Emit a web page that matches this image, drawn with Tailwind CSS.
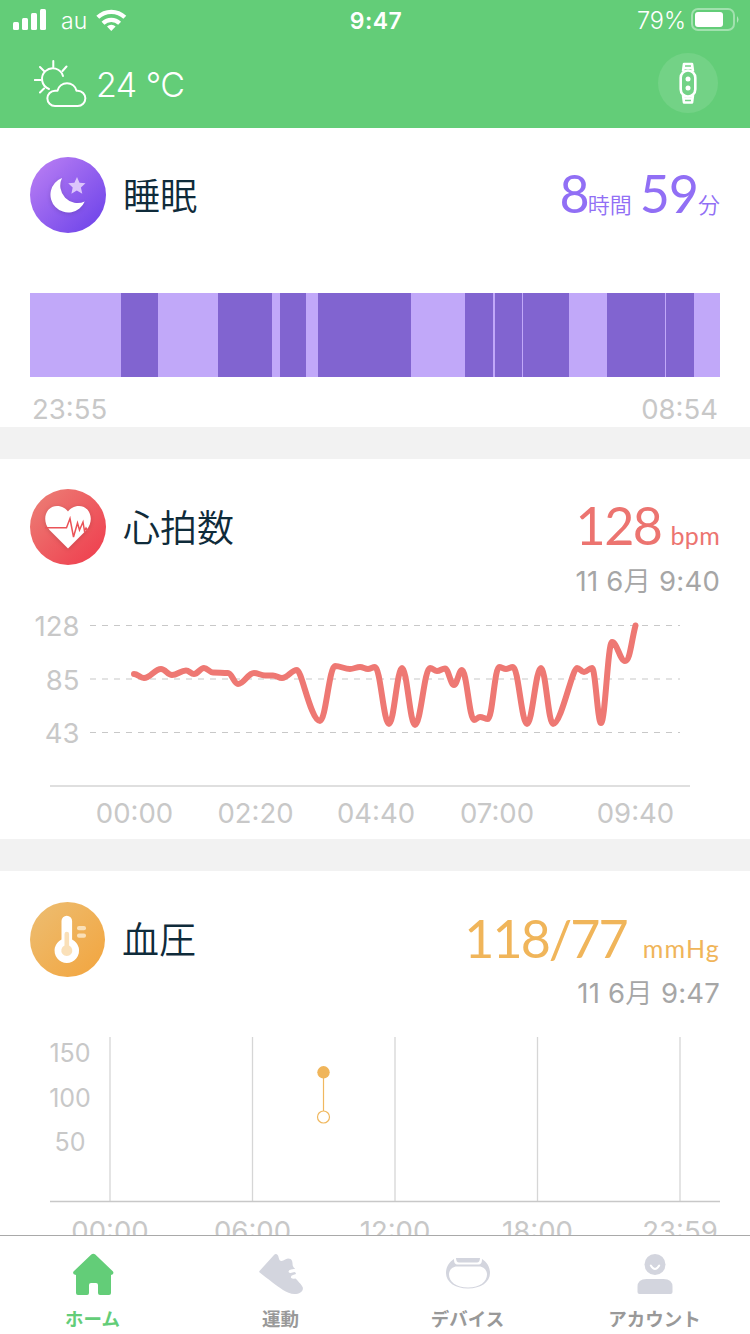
<!DOCTYPE html>
<html lang="ja">
<head>
    <meta charset="UTF-8">
    <meta name="viewport" content="width=device-width, initial-scale=1.0">
    <title>ホーム</title>
    <script src="https://cdn.jsdelivr.net/npm/@tailwindcss/browser@4"></script>
</head>
<body class="flex flex-col w-[750px] h-[1334px] overflow-hidden bg-white font-['Inter','Noto_Sans_CJK_JP',sans-serif]">

    <!-- Header -->
    <header class="h-32 shrink-0 bg-[#63cd78] text-white">
        <div class="grid grid-cols-3 items-center h-10 pl-[13px] pr-[11px]">
            <div class="flex items-center">
                <svg class="w-[34px] h-[22px]" viewBox="0 0 34 22" fill="currentColor">
                    <rect x="0" y="13" width="6" height="8" rx="1.5"/>
                    <rect x="9" y="9" width="6" height="12" rx="1.5"/>
                    <rect x="18" y="4" width="6" height="17" rx="1.5"/>
                    <rect x="27" y="0" width="6" height="21" rx="1.5"/>
                </svg>
                <span class="ml-[14px] pt-0.5 w-[27px] text-[23px] font-light">au</span>
                <svg class="ml-2 w-[31px] h-[22px]" viewBox="0 0 31 22" fill="none" stroke="currentColor" stroke-width="4.2">
                    <path d="M1.800 8.300a19.500 19.500 0 0 1 27 0"/>
                    <path d="M7 14.200a12 12 0 0 1 16.600 0"/>
                    <path d="M15.300 22l-4.300-4.500a6.500 6.500 0 0 1 8.600 0z" fill="currentColor" stroke="none"/>
                </svg>
            </div>
            <div class="pt-0.5 text-center text-[23px] font-semibold tracking-[0.5px]">9:47</div>
            <div class="flex items-center justify-end">
                <span class="mr-[5px] pt-0.5 text-[23.5px] font-light">79%</span>
                <svg class="w-[48px] h-[24px]" viewBox="0 0 48 24" fill="none">
                    <rect x="1" y="1" width="42" height="21" rx="6" stroke="#fff" stroke-opacity=".4" stroke-width="2"/>
                    <rect x="4" y="4" width="28" height="15" rx="3" fill="#fff"/>
                    <path d="M46 8q3 3.500 0 7z" fill="#fff" fill-opacity=".5"/>
                </svg>
            </div>
        </div>
        <div class="flex items-center justify-between h-[86px] pl-[34px] pr-8">
            <div class="flex items-center">
                <svg class="w-[53px] h-[48px]" viewBox="0 0 53 48" fill="none" stroke="currentColor" stroke-width="2" stroke-linecap="round" stroke-linejoin="round">
                    <path d="M15 30a10.700 10.700 0 1 1 14-13"/>
                    <path d="M19.300 2v6M6 8l4 4M32.500 7.500l-4 4.500M.8 21h6M6 33.500l4-4"/>
                    <path d="M21 47a7.500 7.500 0 0 1 0-15.300h2.500a9.800 9.800 0 0 1 19 0h1.200a7.600 7.600 0 0 1 0 15.300z"/>
                </svg>
                <span class="ml-[9px] pt-0.5 text-[34px] font-light tracking-[-0.5px] whitespace-nowrap">24 °C</span>
            </div>
            <div class="flex items-center justify-center size-[60px] rounded-full bg-white/10">
                <svg class="w-[18px] h-[42px]" viewBox="0 0 18 42" fill="none" stroke="currentColor" stroke-width="2.600" stroke-linejoin="round">
                    <path d="M4 9.500L5 2h8l1 7.500M4 33l1 7.500h8l1-7.500M5 6h8M5 36.500h8"/>
                    <rect x="1.700" y="8.500" width="14.600" height="26" rx="7.300"/>
                    <g fill="currentColor" stroke="none">
                        <circle cx="9" cy="17" r="2.500"/>
                        <circle cx="9" cy="26" r="2.500"/>
                    </g>
                </svg>
            </div>
        </div>
    </header>

    <main class="flex flex-col h-[1107px] overflow-hidden gap-8 bg-[#f2f2f2]">
        <!-- Sleep -->
        <section class="h-[299px] shrink-0 bg-white px-[30px] pt-[29px]">
            <div class="flex items-center justify-between h-[76px]">
                <div class="flex items-center gap-[17px]">
                    <svg class="size-[76px]" viewBox="0 0 76 76">
                        <defs>
                            <linearGradient id="sleepBg" x1="0.1" y1="0.1" x2="0.9" y2="0.9">
                                <stop offset="0" stop-color="#b57bf3"/>
                                <stop offset="1" stop-color="#7146ea"/>
                            </linearGradient>
                        </defs>
                        <circle cx="38" cy="38" r="38" fill="url(#sleepBg)"/>
                        <path class="drop-shadow-sm" d="M32 21A17.800 17.800 0 1 0 54.700 44.500A17.400 17.400 0 0 1 32 21z" fill="#fff"/>
                        <path d="M47 20l2.500 5.700 6 .6-4.600 4.200 1.400 6.200-5.500-3.200-5.400 3.200 1.300-6.200-4.500-4.200 6.200-.6z" fill="#dcc5fb"/>
                    </svg>
                    <h2 class="pt-0.5 text-[37px] leading-none font-[350] text-[#0f2b3a]">睡眠</h2>
                </div>
                <div class="flex items-baseline pb-1 text-[#916ff5] leading-none">
                    <span class="font-['Lato'] text-[52px] tracking-[-1px]">8</span>
                    <span class="-ml-px text-[22px] font-[350]">時間</span>
                    <span class="ml-2 font-['Lato'] text-[52px] tracking-[-1px]">59</span>
                    <span class="text-[22px] font-[350]">分</span>
                </div>
            </div>
            <!-- deep sleep blocks over the light sleep strip -->
            <svg class="mt-[60px] w-[690px] h-[84px] bg-[#c1a8f9]" viewBox="0 0 690 84" fill="#8164d0">
                <rect x="91" width="37" height="84"/>
                <rect x="188" width="54" height="84"/>
                <rect x="250" width="26" height="84"/>
                <rect x="288" width="93" height="84"/>
                <rect x="435" width="28" height="84"/>
                <rect x="465" width="27" height="84"/>
                <rect x="493" width="46" height="84"/>
                <rect x="577" width="58" height="84"/>
                <rect x="636" width="28" height="84"/>
            </svg>
            <div class="flex justify-between mt-[14px] px-[2px] text-[27.5px] leading-9 text-[#c8c8c8]">
                <span>23:55</span>
                <span>08:54</span>
            </div>
        </section>

        <!-- Heart rate -->
        <section class="h-[380px] shrink-0 bg-white pt-[30px]">
            <div class="flex items-center justify-between h-[76px] px-[30px]">
                <div class="flex items-center gap-[17px]">
                    <svg class="size-[76px]" viewBox="0 0 76 76">
                        <defs>
                            <linearGradient id="heartBg" x1="0.1" y1="0.1" x2="0.9" y2="0.9">
                                <stop offset="0" stop-color="#ec7a73"/>
                                <stop offset="1" stop-color="#ef4150"/>
                            </linearGradient>
                        </defs>
                        <circle cx="38" cy="38" r="38" fill="url(#heartBg)"/>
                        <path class="drop-shadow-sm" d="M38 59.500L19.500 41C11 31 16 17 27 17c5 0 9 2.500 11 5.500C40 19.500 44 17 49 17c11 0 16 14 7.500 24z" fill="#fff"/>
                        <path d="M15 38.700h21.500L40 29.500l3.500 18.500 4-14 2 7 3.500-8 1.500 9 1.500-3 1.500 2.500h4" fill="none" stroke="#ea5358" stroke-width="1.500"/>
                    </svg>
                    <h2 class="pt-0.5 text-[37px] leading-none font-[350] text-[#0f2b3a]">心拍数</h2>
                </div>
                <div class="flex items-baseline pb-1 text-[#ec7470] leading-none">
                    <span class="font-['Lato'] text-[52px] tracking-[-1.5px]">128</span>
                    <span class="ml-[9px] font-['Lato'] text-[25px] tracking-[0.3px]">bpm</span>
                </div>
            </div>
            <p class="pr-[30px] text-right text-[27.5px] leading-8 tracking-[0.2px] text-[#a6a6a6]">11 6<span class="font-[350]">月</span> 9:40</p>
            <svg class="w-[750px] h-[242px]" viewBox="0 597 750 242" font-size="27.5">
                <g stroke="#c8c8c8" stroke-width="1.200" stroke-dasharray="6 6">
                    <path d="M90 625.500H680M90 679H680M90 732.500H680"/>
                </g>
                <path d="M50 786H690" stroke="#d4d4d4" stroke-width="1.500"/>
                <g fill="#c8c8c8" text-anchor="end">
                    <text x="79.500" y="636">128</text>
                    <text x="79.500" y="690">85</text>
                    <text x="79.500" y="743">43</text>
                </g>
                <g fill="#c8c8c8" text-anchor="middle">
                    <text x="134.500" y="823">00:00</text>
                    <text x="255.500" y="823">02:20</text>
                    <text x="376" y="823">04:40</text>
                    <text x="497" y="823">07:00</text>
                    <text x="635.500" y="823">09:40</text>
                </g>
                <path id="heartLine" fill="none" stroke="#ee7873" stroke-width="6" stroke-linecap="round" stroke-linejoin="round"/>
            </svg>
        </section>

        <!-- Blood pressure -->
        <section class="h-[400px] shrink-0 bg-white pt-[31px]">
            <div class="flex items-center justify-between h-[75px] px-[30px]">
                <div class="flex items-center gap-[17px]">
                    <svg class="size-[75px]" viewBox="0 0 75 75">
                        <defs>
                            <linearGradient id="pressureBg" x1="0.1" y1="0.1" x2="0.9" y2="0.9">
                                <stop offset="0" stop-color="#edbb6d"/>
                                <stop offset="1" stop-color="#f2a743"/>
                            </linearGradient>
                        </defs>
                        <circle cx="37.500" cy="37.500" r="37.500" fill="url(#pressureBg)"/>
                        <path d="M31.500 19a5.300 5.300 0 0 1 10.600 0v18.500a12.300 12.300 0 1 1-10.600 0z" fill="#fff"/>
                        <g fill="#fae0b8">
                            <path d="M34.500 32a2.300 2.300 0 0 1 4.600 0v11.500a5.500 5.500 0 1 1-4.600 0z"/>
                            <rect x="47" y="24" width="9" height="4.200" rx="2"/>
                            <rect x="47" y="31.500" width="9" height="4.200" rx="2"/>
                        </g>
                    </svg>
                    <h2 class="pt-0.5 text-[37px] leading-none font-[350] text-[#0f2b3a]">血圧</h2>
                </div>
                <div class="flex items-baseline pb-1 text-[#f0b55a] leading-none">
                    <span class="font-['Lato'] text-[52px] tracking-[-2px]">118/77</span>
                    <span class="ml-4 font-['Lato'] text-[25px] tracking-[1.200px]">mmHg</span>
                </div>
            </div>
            <p class="mb-px pr-[30px] text-right text-[27.5px] leading-8 tracking-[0.2px] text-[#a6a6a6]">11 6<span class="font-[350]">月</span> 9:47</p>
            <svg class="w-[750px] h-[250px]" viewBox="0 1010 750 250">
                <g stroke="#d6d6d6" stroke-width="1.300">
                    <path d="M110 1037V1201M252.500 1037V1201M395 1037V1201M537.500 1037V1201M680 1037V1201"/>
                    <path d="M50 1201.500H720" stroke="#c8c8c8"/>
                </g>
                <g fill="#c8c8c8" font-size="25" text-anchor="middle">
                    <text x="70" y="1061.500">150</text>
                    <text x="70" y="1106.500">100</text>
                    <text x="70" y="1151">50</text>
                </g>
                <g fill="#c8c8c8" font-size="27.5" text-anchor="middle">
                    <text x="110" y="1241">00:00</text>
                    <text x="252.500" y="1241">06:00</text>
                    <text x="395" y="1241">12:00</text>
                    <text x="537.500" y="1241">18:00</text>
                    <text x="680" y="1241">23:59</text>
                </g>
                <path d="M323.500 1072V1111" stroke="#f0b85f" stroke-width="1.200"/>
                <circle cx="323.500" cy="1072.300" r="6.200" fill="#f0b55a"/>
                <circle cx="323.500" cy="1117" r="6" fill="#fff" stroke="#f0b85f" stroke-width="1.200"/>
            </svg>
        </section>
    </main>

    <!-- Tab bar -->
    <nav class="grid grid-cols-4 h-[99px] shrink-0 border-t border-[#a9a9a9] bg-white pr-[2px] text-[18.5px] leading-6 text-[#999999]">
        <a class="flex flex-col items-center pt-[17px] pr-[2px] text-[#63cd78]">
            <svg class="w-[44px] h-[44px]" viewBox="0 0 44 44" fill="currentColor">
                <path d="M20.300 1.500q2-1.400 4 0L42 18.500q1.500 3-2 3.500v18q0 2-2 2h-9q-2 0-2-2v-8q0-2-2-2h-5q-2 0-2 2v8q0 2-2 2H7q-2 0-2-2V22q-4-.5-2.500-3.500z"/>
            </svg>
            <span class="mt-[10px] font-bold">ホーム</span>
        </a>
        <a class="flex flex-col items-center pt-[17px]">
            <svg class="w-[46px] h-[44px]" viewBox="0 0 46 44" fill="#d3d5de">
                <path d="M1.500 18L16 2q2-2 4 .5c1 2 .8 5.500 3.500 5.500 2.500 0 4-2.500 6.500-2.500 4.500 0 4.500 3.500 4.700 7q.3 2 2.500 3.200l-4.200.8q-3 .8-2.300 2.800 1 1.200 2.800.4l3-.7q1.500.5 1.500 2l-3 1q-2.500.8-2 2.700 1 1.300 4.500.8c2 2 6 6 7.300 9 .8 4-3.300 6.500-8.300 6.500-4 0-8-2-11.500-4C19 33 10 26 1.700 19.500q-.8-.7-.2-1.500z"/>
            </svg>
            <span class="mt-[10px] font-bold">運動</span>
        </a>
        <a class="flex flex-col items-center pt-[17px]">
            <svg class="w-[46px] h-[44px]" viewBox="0 0 46 44" fill="#d3d5de">
                <path fill-rule="evenodd" d="M9 6C4 9 1 14 1 20c0 9 9 15.500 22 15.500s22-6.500 22-15.500c0-6-3-11-8-14 0 4-1 5.500-4 5.500H13c-3 0-4-1.500-4-5.500zm3 7.500h22c5 0 8 4 8 8 0 7-7 13-19 13S4 28.500 4 21.500c0-4 3-8 8-8z"/>
                <path d="M11 5h24q-.3 4.500-3 4.500H14q-2.700 0-3-4.500z"/>
            </svg>
            <span class="mt-[10px] font-bold">デバイス</span>
        </a>
        <a class="flex flex-col items-center pt-[17px]">
            <svg class="w-[36px] h-[44px]" viewBox="0 0 36 44" fill="#d3d5de">
                <circle cx="18" cy="11.500" r="10.500"/>
                <path d="M.5 39V34q0-8 9-8h17q9 0 9 8v5q0 2-2 2h-31q-2 0-2-2z"/>
                <path d="M13.800 12.500q4.200 7 8.400 0" fill="none" stroke="#fff" stroke-width="2" stroke-linecap="round"/>
            </svg>
            <span class="mt-[10px] font-bold">アカウント</span>
        </a>
    </nav>

    <script>
        // x, y and, where the slope is uneven, the two handle lengths
        const points = [
            [134, 674], [144, 678], [161, 669], [172, 675], [186, 670.5], [194, 674], [204, 668],
            [213, 672.5], [228, 673], [238, 684], [254, 673], [265, 675.5], [273, 675.5], [282, 678], [297, 670],
            [320, 721, 0.2, 0.4], [335, 666], [350, 669], [360, 667], [368, 669], [375, 667], [389, 724],
            [402, 668], [415, 725], [430, 668], [437, 671], [445, 668.5], [454, 685], [462, 670],
            [474, 720], [480, 717], [488, 719], [499, 667], [506, 669], [513, 667], [527, 724],
            [541, 668], [553, 724], [577, 668, 0.35, 0.2], [584, 672], [592, 668], [601, 723], [612, 642],
            [625, 661]
        ];

        let d = `M${points[0][0]} ${points[0][1]}`;
        for (let i = 1; i < points.length; i++) {
            const [x0, y0] = points[i - 1];
            const [x1, y1, a = 0.38, b = 0.38] = points[i];
            d += `C${x0 + (x1 - x0) * a} ${y0} ${x1 - (x1 - x0) * b} ${y1} ${x1} ${y1}`;
        }
        // Latest reading is still rising
        d += "C630 661 631 643 635.5 625.5";
        document.getElementById("heartLine").setAttribute("d", d);
    </script>
</body>
</html>
